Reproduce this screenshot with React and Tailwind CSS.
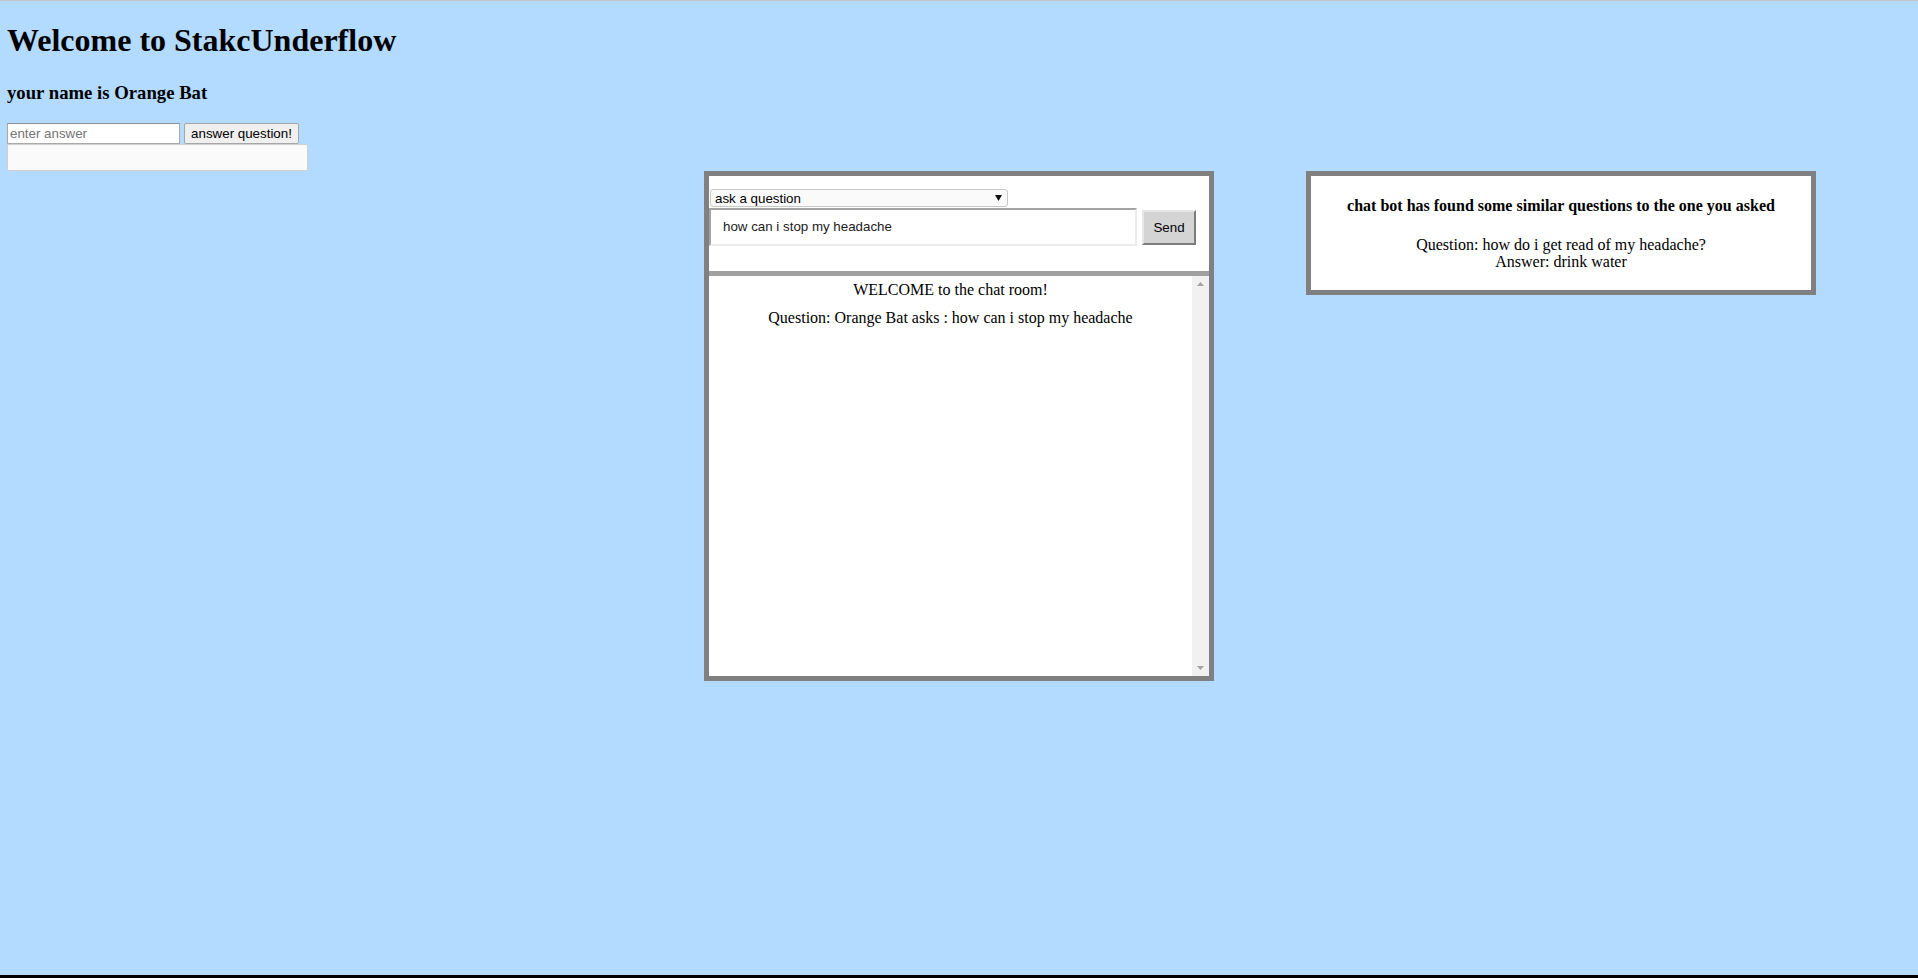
import React from "react";

const sans = { fontFamily: '"Liberation Sans", Arial, sans-serif' };

export default function App() {
  return (
    <div className="w-full h-[978px] bg-[#b3daff] flex flex-col overflow-hidden text-black font-['Liberation_Serif',serif]">
      <div className="h-px bg-[#c4c4c4] shrink-0" />
      <div className="flex-1 pl-[7px] flex flex-col">
        <h1 className="mt-[21px] text-[32px] leading-[37px] font-bold">Welcome to StakcUnderflow</h1>
        <h3 className="mt-[23px] text-[18.72px] leading-[21px] font-bold">your name is Orange Bat</h3>
        <div className="mt-[20px] flex items-start font-['Liberation_Sans',Arial,sans-serif] text-[13.33px]">
          <div className="w-[173px] h-[21px] bg-white border border-[#a9a9a9] border-t-[#8f8f8f] flex items-center pl-[2px] text-[#757575]">
            enter answer
          </div>
          <div className="ml-[4px] w-[115px] h-[21px] bg-[#efefef] border border-[#a6a6a6] rounded-[2px] flex items-center justify-center text-black">
            answer question!
          </div>
        </div>
        <div className="w-[301px] h-[27px] bg-[#fafafa] border border-[#d0d0d0] rounded-[2px]" />
        <div className="flex items-start">
          <div className="ml-[697px] w-[510px] h-[510px] border-[5px] border-[#808080] bg-white flex flex-col shrink-0">
            <div className="h-[95px] pt-[13px] flex flex-col shrink-0" style={sans}>
              <div className="ml-[1px] w-[298px] h-[18px] border border-[#c8c8c8] rounded-[3px] bg-[#fafafa] flex items-center justify-between pl-[4px] pr-[5px] text-[13.33px] leading-none">
                <span className="pt-[1px]">ask a question</span>
                <svg width="7" height="6" viewBox="0 0 7 6"><path d="M0 0 L7 0 L3.5 6 Z" fill="#111" /></svg>
              </div>
              <div className="mt-[1px] flex items-start">
                <div className="w-[428px] h-[38px] border-2 border-t-[#a3a3a3] border-l-[#a3a3a3] border-b-[#ececec] border-r-[#ececec] flex items-center pl-[12px] text-[13.33px] text-[#1a1a1a]">
                  how can i stop my headache
                </div>
                <div className="ml-[5px] mt-[2px] w-[54px] h-[35px] bg-[#d4d4d4] border-2 border-t-[#e6e6e6] border-l-[#e6e6e6] border-b-[#7c7c7c] border-r-[#7c7c7c] flex items-center justify-center text-[13.33px]">
                  Send
                </div>
              </div>
            </div>
            <div className="h-[5px] bg-[#a0a0a0] shrink-0" />
            <div className="flex-1 flex min-h-0">
              <div className="flex-1 pt-[5px] flex flex-col gap-[10px] text-center text-[16px] leading-[18px]">
                <div>WELCOME to the chat room!</div>
                <div>Question: Orange Bat asks : how can i stop my headache</div>
              </div>
              <div className="w-[17px] bg-[#f1f1f1] flex flex-col justify-between items-center py-[6px]">
                <svg width="7" height="4" viewBox="0 0 7 4"><path d="M3.5 0 L7 4 L0 4 Z" fill="#a3a3a3" /></svg>
                <svg width="7" height="4" viewBox="0 0 7 4"><path d="M0 0 L7 0 L3.5 4 Z" fill="#a3a3a3" /></svg>
              </div>
            </div>
          </div>
          <div className="ml-[92px] w-[510px] h-[124px] border-[5px] border-[#808080] bg-white text-center text-[16px] shrink-0">
            <h4 className="mt-[21px] font-bold leading-[18px]">chat bot has found some similar questions to the one you asked</h4>
            <p className="mt-[21px] leading-[17px]">
              Question: how do i get read of my headache?
              <br />
              Answer: drink water
            </p>
          </div>
        </div>
      </div>
      <div className="h-[3px] bg-black shrink-0" />
    </div>
  );
}
